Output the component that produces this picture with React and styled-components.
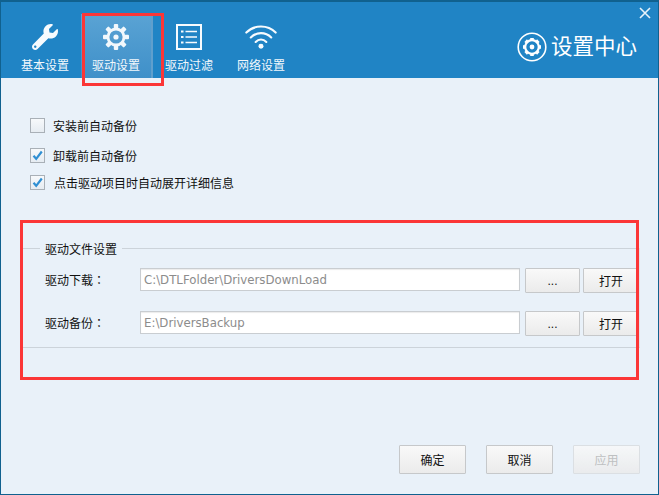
import React from 'react';
import styled, { createGlobalStyle } from 'styled-components';
import { FaWrench } from 'react-icons/fa';

const GlobalStyle = createGlobalStyle`
  html, body {
    margin: 0;
    padding: 0;
    background: #e9f1f9;
  }
  * {
    box-sizing: border-box;
  }
`;

const CJK = '"Liberation Sans", "Noto Sans CJK SC", sans-serif';

const Window = styled.div`
  position: relative;
  width: 659px;
  height: 495px;
  display: flex;
  flex-direction: column;
  background: #e9f1f9;
  border: 1px solid #10618f;
  border-top-width: 2px;
  font-family: ${CJK};
  font-size: 12px;
  color: #111;
  overflow: hidden;
`;

const Header = styled.header`
  position: relative;
  height: 76px;
  flex: none;
  display: flex;
  align-items: flex-end;
  justify-content: space-between;
  padding: 0 21px 0 8px;
  background: #2084c5;
`;

const Tabs = styled.nav`
  display: flex;
`;

const Tab = styled.div`
  width: 72px;
  height: 64px;
  display: flex;
  flex-direction: column;
  align-items: center;
  padding-top: 7px;
  color: #f2f8fc;
  background: ${props => props.$active ? 'linear-gradient(#5aa3d4, #3f90c9)' : 'transparent'};
  border-right: ${props => props.$active ? '2px solid #5f9fcd' : '0'};
`;

const TabIcon = styled.div`
  width: 32px;
  height: 32px;
  display: flex;
  align-items: center;
  justify-content: center;
  margin-bottom: 3px;
`;

const Brand = styled.div`
  display: flex;
  align-items: center;
  gap: 4px;
  margin-bottom: 16px;
  color: #fff;
  font-size: 21.5px;
  line-height: 30px;
`;

const Close = styled.svg`
  position: absolute;
  top: 5px;
  right: 7px;
`;

const Main = styled.main`
  flex: 1;
  display: flex;
  flex-direction: column;
  padding-top: 40px;
`;

const Options = styled.section`
  display: flex;
  flex-direction: column;
  padding-left: 29px;
`;

const Option = styled.label`
  display: flex;
  align-items: center;
  gap: ${props => props.$gap || 8}px;
  height: 15px;
  margin-bottom: ${props => props.$after || 0}px;
`;

const Box = styled.span`
  width: 15px;
  height: 15px;
  display: flex;
  align-items: center;
  justify-content: center;
  background: linear-gradient(#f7f9fb, #e6ecf2);
  border: 1px solid #a9b0b7;
`;

const Group = styled.section`
  margin: 58px 18px 0 22px;
  height: 100px;
  display: flex;
  flex-direction: column;
  border-bottom: 1px solid #ccd3da;
  border-right: 1px solid #dfe5eb;
`;

const Legend = styled.div`
  display: flex;
  align-items: center;
  height: 16px;
  margin-top: -8px;
`;

const LegendLine = styled.span`
  height: 1px;
  background: #ccd3da;
  flex: ${props => props.$grow ? 1 : 'none'};
  width: ${props => props.$grow ? 'auto' : '17px'};
`;

const LegendText = styled.span`
  padding: 0 5px;
`;

const Row = styled.div`
  display: flex;
  align-items: flex-start;
  margin-top: ${props => props.$top}px;
  padding-left: 22px;
`;

const RowLabel = styled.span`
  width: 95px;
  line-height: 24px;
`;

const Colon = styled.span`
  font-family: "Noto Sans CJK TC", sans-serif;
`;

const PathInput = styled.div`
  width: 380px;
  height: 23px;
  padding-left: 3px;
  background: #fff;
  border: 1px solid #c9cdd1;
  box-shadow: inset 0 1px 1px #ececec;
  color: #8c8c8c;
  font-family: "DejaVu Sans", sans-serif;
  font-size: 11.75px;
  line-height: 22px;
  white-space: nowrap;
`;

const Button = styled.button`
  width: ${props => props.$width}px;
  height: ${props => props.$height}px;
  margin-left: ${props => props.$left || 0}px;
  padding: 0;
  background: linear-gradient(#f9f9f9, #ebebeb);
  border: 1px solid ${props => props.disabled ? '#d8dbde' : '#c6c8ca'};
  border-radius: 1px;
  color: ${props => props.disabled ? '#b4b4b4' : '#111'};
  font-family: ${CJK};
  font-size: 12px;
  opacity: ${props => props.disabled ? 0.8 : 1};
`;

const Footer = styled.footer`
  margin-top: auto;
  display: flex;
  justify-content: flex-end;
  gap: 20px;
  padding: 0 18px 20px 0;
`;

const Highlight = styled.div`
  position: absolute;
  left: ${props => props.$x}px;
  top: ${props => props.$y}px;
  width: ${props => props.$w}px;
  height: ${props => props.$h}px;
  border: 3px solid #fb3637;
  pointer-events: none;
`;

function Gear() {
  const teeth = [0, 45, 90, 135, 180, 225, 270, 315];
  return (
    <svg width="28" height="28" viewBox="0 0 28 28">
      {teeth.map(angle => (
        <rect key={angle} x="11.8" y="1" width="4.4" height="5" rx="1" fill="#f2f8fc" transform={`rotate(${angle} 14 14)`} />
      ))}
      <circle cx="14" cy="14" r="8" fill="none" stroke="#f2f8fc" strokeWidth="2.8" />
      <circle cx="14" cy="14" r="2.6" fill="#f2f8fc" />
    </svg>
  );
}

function ListIcon() {
  return (
    <svg width="28" height="28" viewBox="0 0 28 28" fill="none" stroke="#f7fbfe">
      <rect x="2" y="2" width="24" height="24" strokeWidth="2" />
      <path d="M10.5 8.5H22M10.5 14H22M10.5 19.5H22" strokeWidth="1.6" />
      <path d="M6 8.5H8.5M6 14H8.5M6 19.5H8.5" strokeWidth="2" />
    </svg>
  );
}

function Wifi() {
  return (
    <svg width="36" height="28" viewBox="0 0 36 28" fill="none" stroke="#f7fbfe" strokeLinecap="round">
      <path d="M1.5 9C10.5 0 25.5 0 34.5 9" strokeWidth="2.4" />
      <path d="M6.5 14.5C13 8 23 8 29.5 14.5" strokeWidth="2.4" />
      <path d="M12 19.5C15.5 16 20.5 16 24 19.5" strokeWidth="2.4" />
      <circle cx="18" cy="24.5" r="2.8" fill="#f7fbfe" stroke="none" />
    </svg>
  );
}

function BrandIcon() {
  const teeth = [0, 45, 90, 135, 180, 225, 270, 315];
  return (
    <svg width="30" height="30" viewBox="0 0 30 30" fill="none" stroke="#fff">
      <circle cx="15" cy="15" r="13.8" strokeWidth="1.6" />
      {teeth.map(angle => (
        <rect key={angle} x="13.2" y="6" width="3.6" height="3" fill="#fff" stroke="none" transform={`rotate(${angle} 15 15)`} />
      ))}
      <circle cx="15" cy="15" r="6.8" strokeWidth="2.2" />
      <circle cx="15" cy="15" r="2.4" fill="#fff" stroke="none" />
    </svg>
  );
}

function Check() {
  return (
    <svg width="13" height="13" viewBox="0 0 13 13" fill="none">
      <path d="M2.5 6.8L5.2 9.8L10.8 2.5" stroke="#2f8fd3" strokeWidth="2.2" />
    </svg>
  );
}

const tabs = [
  { label: '基本设置', icon: <FaWrench size={26} color="#f7fbfe" /> },
  { label: '驱动设置', icon: <Gear />, active: true },
  { label: '驱动过滤', icon: <ListIcon /> },
  { label: '网络设置', icon: <Wifi /> },
];

export default function App() {
  return (
    <>
      <GlobalStyle />
      <Window>
        <Header>
          <Tabs>
            {tabs.map(tab => (
              <Tab key={tab.label} $active={tab.active}>
                <TabIcon>{tab.icon}</TabIcon>
                {tab.label}
              </Tab>
            ))}
          </Tabs>
          <Brand>
            <BrandIcon />
            设置中心
          </Brand>
          <Close width="12" height="12" viewBox="0 0 12 12">
            <path d="M1 1L11 11M11 1L1 11" stroke="#e8f3fa" strokeWidth="1.6" />
          </Close>
        </Header>
        <Main>
          <Options>
            <Option $after={15}>
              <Box />
              安装前自动备份
            </Option>
            <Option $after={12}>
              <Box><Check /></Box>
              卸载前自动备份
            </Option>
            <Option $gap={9}>
              <Box><Check /></Box>
              点击驱动项目时自动展开详细信息
            </Option>
          </Options>
          <Group>
            <Legend>
              <LegendLine />
              <LegendText>驱动文件设置</LegendText>
              <LegendLine $grow />
            </Legend>
            <Row $top={12}>
              <RowLabel>驱动下载<Colon>：</Colon></RowLabel>
              <PathInput>C:\DTLFolder\DriversDownLoad</PathInput>
              <Button $width={55} $height={25} $left={5}>...</Button>
              <Button $width={56} $height={25} $left={3}>打开</Button>
            </Row>
            <Row $top={18}>
              <RowLabel>驱动备份<Colon>：</Colon></RowLabel>
              <PathInput>E:\DriversBackup</PathInput>
              <Button $width={55} $height={25} $left={5}>...</Button>
              <Button $width={56} $height={25} $left={3}>打开</Button>
            </Row>
          </Group>
          <Footer>
            <Button $width={67} $height={29}>确定</Button>
            <Button $width={67} $height={29}>取消</Button>
            <Button $width={67} $height={29} disabled>应用</Button>
          </Footer>
        </Main>
        <Highlight $x={81} $y={11} $w={82} $h={73} />
        <Highlight $x={19} $y={218} $w={619} $h={160} />
      </Window>
    </>
  );
}
